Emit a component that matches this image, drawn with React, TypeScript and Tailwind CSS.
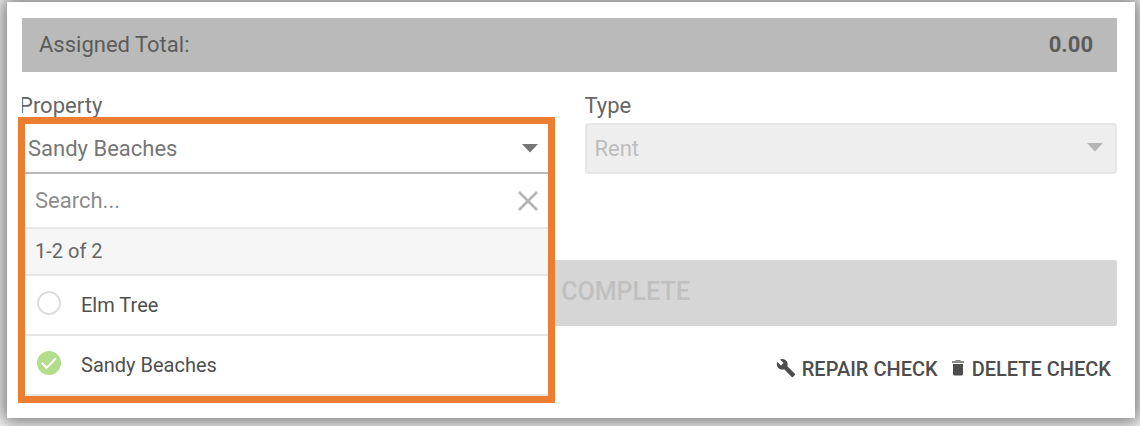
import { useState } from "react";

const properties = ["Elm Tree", "Sandy Beaches"];

function Caret({ className }: { className: string }) {
  return (
    <svg viewBox="0 0 16 9" className={className} aria-hidden="true">
      <path d="M0 0h16L8 8.5z" fill="currentColor" />
    </svg>
  );
}

function PropertyOption({
  name,
  checked,
  onSelect,
}: {
  name: string;
  checked: boolean;
  onSelect: () => void;
}) {
  return (
    <label className="flex h-15 items-center gap-5 border-t-2 border-[#e6e6e6] pl-3 text-xl text-[#4f4f4f]">
      <span className="mb-1 grid size-6 place-items-center">
        <input
          type="radio"
          name="property"
          checked={checked}
          onChange={onSelect}
          className="col-start-1 row-start-1 size-6 appearance-none rounded-full border-2 border-[#dedede] bg-white checked:border-[#b3dd8c] checked:bg-[#b3dd8c]"
        />
        {checked && (
          <svg
            viewBox="0 0 24 24"
            className="pointer-events-none col-start-1 row-start-1 size-6"
            fill="none"
            stroke="white"
            strokeWidth="2"
            aria-hidden="true"
          >
            <path d="M4.8 12l4.8 4.8L19 7.2" />
          </svg>
        )}
      </span>
      {name}
    </label>
  );
}

export default function App() {
  const [selected, setSelected] = useState("Sandy Beaches");
  const [search, setSearch] = useState("");

  return (
    <div className="overflow-hidden bg-white pt-0.5 pr-[5px] pb-2 pl-[7px] font-[Roboto,sans-serif] text-[#666666]">
      <main className="bg-white pt-4 pr-[18px] pb-[35px] pl-[15px] shadow-[0_0_18px_5px_rgba(0,0,0,0.55)]">
        <div className="flex h-[54px] items-center justify-between bg-[#bababa] pr-6 pb-0.5 pl-[17px] text-[22px] text-[#5c5c5c]">
          <span>Assigned Total:</span>
          <span className="font-bold">0.00</span>
        </div>

        <div className="mt-5 grid grid-cols-2 gap-[30px]">
          <div>
            <label
              htmlFor="property"
              className="block overflow-hidden pb-1 -indent-[3px] text-[22px] leading-[27px]"
            >
              Property
            </label>
            <div className="relative h-[51px]">
              <div className="absolute -top-1.5 right-0 -left-1 z-10 border-[7px] border-[#ed7d31] bg-white">
                <button
                  id="property"
                  type="button"
                  aria-haspopup="true"
                  aria-expanded="true"
                  className="flex h-[50px] w-full items-center justify-between border-b-2 border-[#b9b9b9] pl-[3px] pr-2.5 text-[22px] text-[#777777]"
                >
                  {selected}
                  <Caret className="h-[9px] w-4 text-[#777777]" />
                </button>
                <div className="flex h-[53px] items-center pr-2.5 pl-2.5">
                  <input
                    type="text"
                    aria-label="Search"
                    placeholder="Search..."
                    value={search}
                    onChange={(e) => setSearch(e.target.value)}
                    className="min-w-0 flex-1 text-[22px] outline-none placeholder:text-[#8c8c8c]"
                  />
                  <button type="button" aria-label="Clear search" onClick={() => setSearch("")}>
                    <svg
                      viewBox="0 0 20 20"
                      className="size-5 text-[#b5b5b5]"
                      stroke="currentColor"
                      strokeWidth="2.6"
                      aria-hidden="true"
                    >
                      <path d="M1 1l18 18M19 1L1 19" />
                    </svg>
                  </button>
                </div>
                <div className="flex h-[47px] items-center border-t-2 border-[#e8e8e8] bg-[#f6f6f6] pb-0.5 pl-2.5 text-xl text-[#666666]">
                  1-2 of 2
                </div>
                <div className="border-b-2 border-[#e6e6e6]">
                  {properties.map((name) => (
                    <PropertyOption
                      key={name}
                      name={name}
                      checked={name === selected}
                      onSelect={() => setSelected(name)}
                    />
                  ))}
                </div>
              </div>
            </div>
          </div>

          <div>
            <label htmlFor="type" className="block pb-1 text-[22px] leading-[27px]">
              Type
            </label>
            <div className="relative">
              <select
                id="type"
                disabled
                className="h-[51px] w-full appearance-none rounded border-2 border-[#e6e6e6] bg-[#eeeeee] pl-2 text-[22px] text-[#bdbdbd] opacity-100"
              >
                <option>Rent</option>
              </select>
              <Caret className="pointer-events-none absolute top-5 right-3.5 h-[9px] w-4 text-[#b5b5b5]" />
            </div>
          </div>
        </div>

        <button
          type="button"
          disabled
          className="mt-[86px] flex h-[66px] w-full items-center justify-center rounded-xs bg-[#d6d6d6] pb-0.5 pl-28 text-[25px] font-medium text-[#c0c0c0]"
        >
          COMPLETE
        </button>

        <div className="mt-[29px] flex justify-end gap-3.5 pr-1.5 text-xl leading-7 font-medium text-[#4d4d4d]">
          <button type="button" className="flex items-center gap-1.5">
            <svg viewBox="0 0 24 24" className="mb-0.5 size-5" fill="currentColor" aria-hidden="true">
              <path d="M22.7 19l-9.1-9.1c.9-2.3.4-5-1.5-6.9-2-2-5-2.4-7.4-1.3L9 6 6 9 1.6 4.7C.4 7.1.9 10.1 2.9 12.1c1.9 1.9 4.6 2.4 6.9 1.5l9.1 9.1c.4.4 1 .4 1.4 0l2.3-2.3c.5-.4.5-1.1.1-1.4z" />
            </svg>
            REPAIR CHECK
          </button>
          <button type="button" className="flex items-center gap-2">
            <svg viewBox="0 0 12 16" className="mb-0.5 h-4 w-3" aria-hidden="true">
              <path d="M0 1H3L4 0H8L9 1H12V3H0Z" fill="#8a8a8a" />
              <path d="M1 4H11V14Q11 15.500 9.500 15.500H2.500Q1 15.500 1 14Z" fill="currentColor" />
            </svg>
            DELETE CHECK
          </button>
        </div>
      </main>
    </div>
  );
}
